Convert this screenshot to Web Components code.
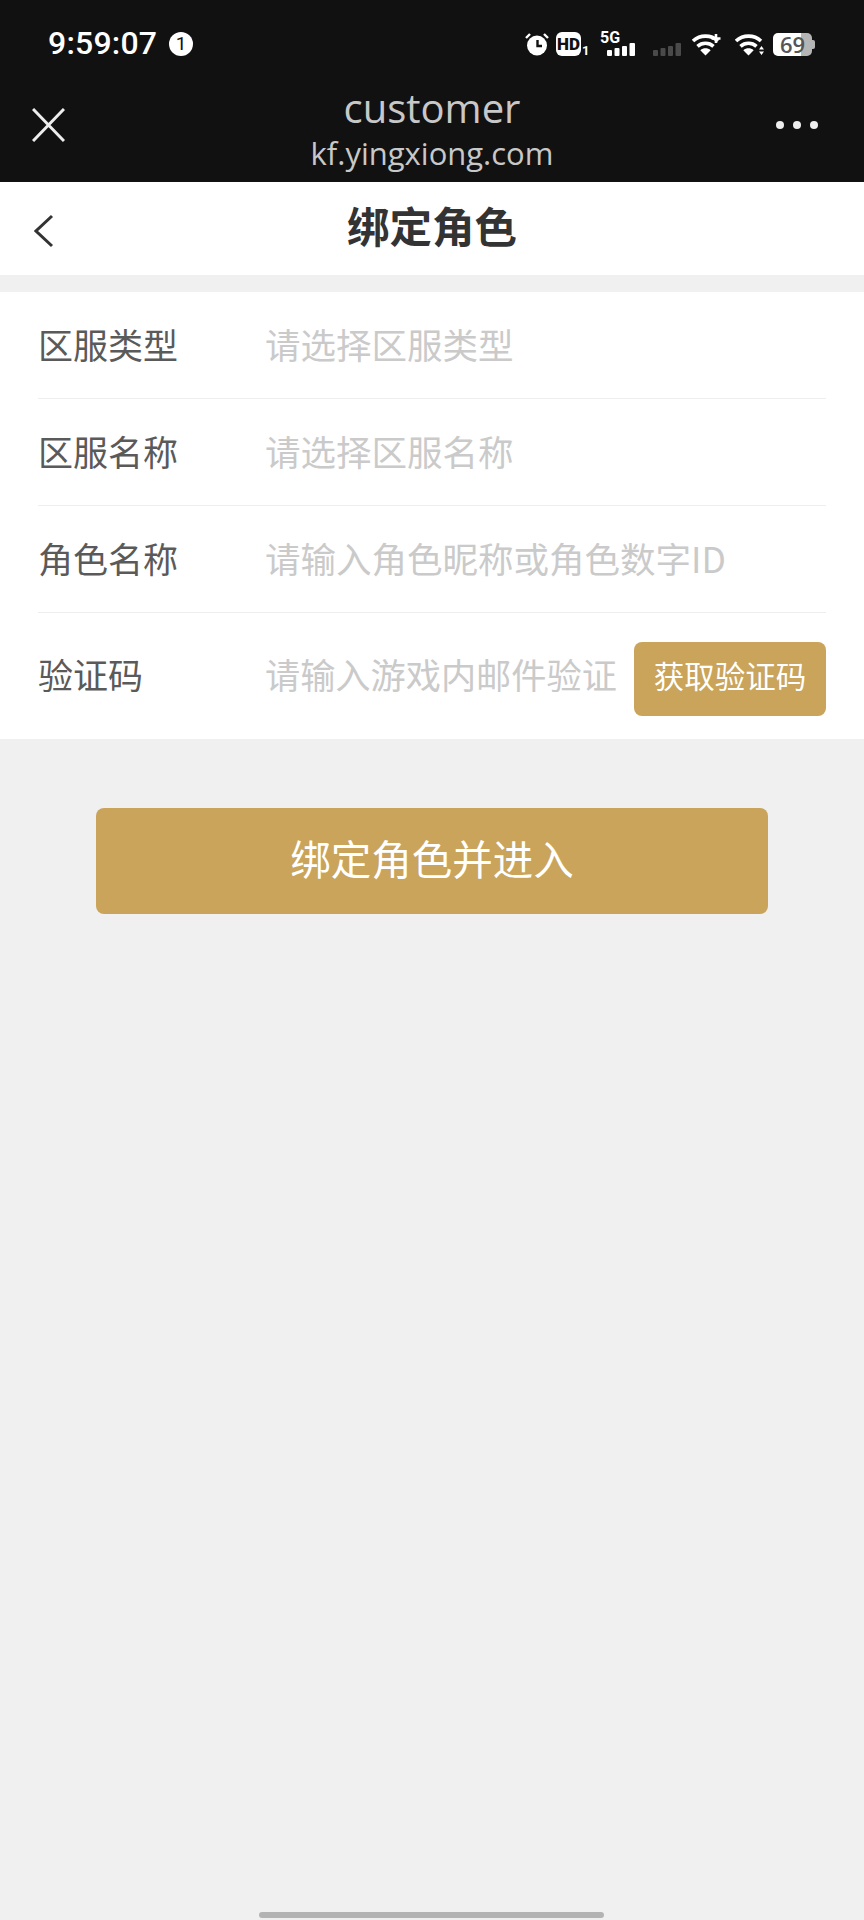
<!DOCTYPE html>
<html lang="zh-CN"><head><meta charset="utf-8"><title>绑定角色</title>
<style>
html,body{margin:0;padding:0;}
body{width:864px;height:1920px;background:#f0f0f0;display:flex;flex-direction:column;overflow:hidden;font-family:"Noto Sans CJK SC","Noto Sans",sans-serif;}
form-card{margin-top:17px;}
main-action{margin-top:69px;}
home-indicator{margin-top:auto;}
</style></head><body>
<status-bar></status-bar>
<web-header title="customer" url="kf.yingxiong.com"></web-header>
<title-bar>绑定角色</title-bar>
<form-card>
  <form-row label="区服类型" placeholder="请选择区服类型"></form-row>
  <form-row label="区服名称" placeholder="请选择区服名称"></form-row>
  <form-row label="角色名称" placeholder="请输入角色昵称或角色数字ID"></form-row>
  <form-row label="验证码" placeholder="请输入游戏内邮件验证" tall last action="获取验证码"></form-row>
</form-card>
<main-action>绑定角色并进入</main-action>
<home-indicator></home-indicator>
<script>
function def(name, html, init){
  customElements.define(name, class extends HTMLElement{
    constructor(){super();this.attachShadow({mode:'open'}).innerHTML=html;}
    connectedCallback(){ if(init) init(this,this.shadowRoot); }
  });
}
const wifi=(extra)=>`<svg width="30" height="23" viewBox="0 0 30 23">
  <path d="M1 8C8 1.500 19 1.500 26 8" fill="none" stroke="#fff" stroke-width="3.600"/>
  <path d="M5.500 13.300C10 9.300 17 9.300 21.500 13.300" fill="none" stroke="#fff" stroke-width="3.600"/>
  <path d="M13.500 22.500 8.300 17.200C11.500 14.700 15.500 14.700 18.700 17.200Z" fill="#fff"/>${extra}</svg>`;
const bars=(c)=>`<rect x="0" y="7" width="5" height="6" rx="1" fill="${c}"/><rect x="7.5" y="5" width="5" height="8" rx="1" fill="${c}"/><rect x="15" y="3" width="5" height="10" rx="1" fill="${c}"/><rect x="22.5" y="0" width="5.5" height="13" rx="1" fill="${c}"/>`;
def('status-bar',`<style>
:host{display:flex;align-items:center;height:87px;box-sizing:border-box;padding:0 49px 0 48px;background:#111;color:#fff;}
.time{font:500 32px/1 Roboto,sans-serif;letter-spacing:.2px;width:121px;margin-top:-1px;}
.num{width:24px;height:24px;border-radius:50%;background:#fff;color:#111;font:400 19px/24px Roboto,sans-serif;text-align:center;}
.icons{margin-left:auto;display:flex;align-items:flex-end;height:24px;}
svg{display:block;flex:none;}
.hd{width:25px;height:24px;border-radius:6px;background:#fff;color:#111;font:900 17px/24px Roboto,sans-serif;text-align:center;margin-left:7px;}
.sub{font:700 13px/11px Roboto,sans-serif;width:7px;margin-left:1px;text-align:center;}
.sg{position:relative;width:28px;height:24px;margin-left:18px;display:flex;flex-direction:column;}
.fg{font:700 16px/12px Roboto,sans-serif;margin-left:-7px;height:11px;letter-spacing:0;}
.batt{position:relative;width:39px;height:23px;margin-left:8px;margin-right:3px;box-sizing:border-box;border-radius:5px;background:linear-gradient(90deg,#fff 0 72%,#b5b5b5 72% 100%);color:#555;font:600 22px/23px "Open Sans",sans-serif;text-align:center;}
.batt::after{content:"";position:absolute;left:39px;top:7px;width:3px;height:9px;border-radius:0 2px 2px 0;background:#b5b5b5;}
</style>
<div class="time">9:59:07</div><div class="num">1</div>
<div class="icons">
<svg width="24" height="24" viewBox="0 0 24 24"><circle cx="12" cy="13.5" r="10" fill="#fff"/><path d="M12.5 8v6h4.500" fill="none" stroke="#111" stroke-width="2.400"/><path d="M1 6 5 2M23 6 19 2" stroke="#fff" stroke-width="2.400"/></svg>
<div class="hd">HD</div><div class="sub">1</div>
<div class="sg"><div class="fg">5G</div><svg width="28" height="13" viewBox="0 0 28 13">${bars('#fff')}</svg></div>
<svg style="margin-left:17px" width="30" height="13" viewBox="0 0 28 13">${bars('#4a4a4a')}</svg>
<div style="margin-left:10px;height:23px">${wifi('<path d="M24 1v9M19.500 5.500h9" stroke="#fff" stroke-width="2.600"/>')}</div>
<div style="margin-left:13px;height:23px">${wifi('<path d="M26.500 13 24 16.500h5ZM26.500 22 24 18.500h5Z" fill="#fff"/>')}</div>
<div class="batt">69</div>
</div>`);
def('web-header',`<style>
:host{display:grid;grid-template-columns:96px 1fr 96px;align-items:center;height:95px;background:#111;border-bottom:0;}
svg{display:block;}
.x{margin:-20px 0 0 32px;}
.c{text-align:center;font-family:"Open Sans",sans-serif;color:#c8c8c8;margin-top:-14px;white-space:nowrap;}
.t{font-size:40px;line-height:46px;padding-top:1px;}
.u{font-size:31px;line-height:38px;margin-top:3px;}
.m{margin:-20px 0 0 8px;}
</style>
<svg class="x" width="33" height="34" viewBox="0 0 33 34"><path d="M1 1 32 33M32 1 1 33" stroke="#eee" stroke-width="3" fill="none"/></svg>
<div class="c"><div class="t"></div><div class="u"></div></div>
<svg class="m" width="44" height="8" viewBox="0 0 44 8"><circle cx="4" cy="4" r="4" fill="#eee"/><circle cx="21" cy="4" r="4" fill="#eee"/><circle cx="38" cy="4" r="4" fill="#eee"/></svg>`,
(h,s)=>{s.querySelector('.t').textContent=h.getAttribute('title');s.querySelector('.u').textContent=h.getAttribute('url');});
def('title-bar',`<style>
:host{display:grid;grid-template-columns:96px 1fr 96px;align-items:center;height:93px;background:#fff;color:#333;}
svg{display:block;margin:4px 0 0 34px;}
.t{text-align:center;font:700 42.500px/1 "Noto Sans CJK SC",sans-serif;margin-top:-7px;}
</style>
<svg width="20" height="34" viewBox="0 0 20 34"><path d="M18 2 2 17 18 32" fill="none" stroke="#333" stroke-width="3"/></svg>
<div class="t"><slot></slot></div><span></span>`);
def('form-card',`<style>:host{display:block;background:#fff;padding:0 38px;}</style><slot></slot>`);
def('form-row',`<style>
:host{display:flex;align-items:center;height:107px;box-sizing:border-box;border-bottom:1px solid #eeeeee;font:400 35px/46px "Noto Sans CJK SC",sans-serif;}
:host([tall]){height:126px;border-bottom:0;}
.l{flex:none;width:227px;color:#5a5a5a;margin-top:-2px;white-space:nowrap;}
.p{flex:1;min-width:0;white-space:nowrap;color:#cacaca;margin-top:-2px;font-size:35.500px;}
:host([tall]) .l,:host([tall]) .p{margin-top:-5px;}
:host([tall]) .p{font-size:35.200px;}
button{flex:none;width:192px;height:74px;margin-left:16px;border:0;border-radius:8px;background:#c9a45a;color:#fff;font:400 30.500px/1 "Noto Sans CJK SC",sans-serif;padding:0 0 7px;margin-top:6px;}
</style><div class="l"></div><div class="p"></div>`,
(h,s)=>{s.querySelector('.l').textContent=h.getAttribute('label');s.querySelector('.p').textContent=h.getAttribute('placeholder');
 const a=h.getAttribute('action'); if(a&&!s.querySelector('button')){const b=document.createElement('button');b.textContent=a;s.appendChild(b);}});
def('main-action',`<style>
:host{display:block;padding:0 96px;}
button{display:block;width:100%;height:106px;border:0;border-radius:8px;background:#c9a45a;color:#fff;font:400 40.500px/1 "Noto Sans CJK SC",sans-serif;padding:0 0 6px;}
</style><button><slot></slot></button>`);
def('home-indicator',`<style>
:host{display:block;padding:0 260px 2px 259px;}
div{height:6px;border-radius:3px;background:#b3b3b3;}
</style><div></div>`);
</script>
</body></html>
